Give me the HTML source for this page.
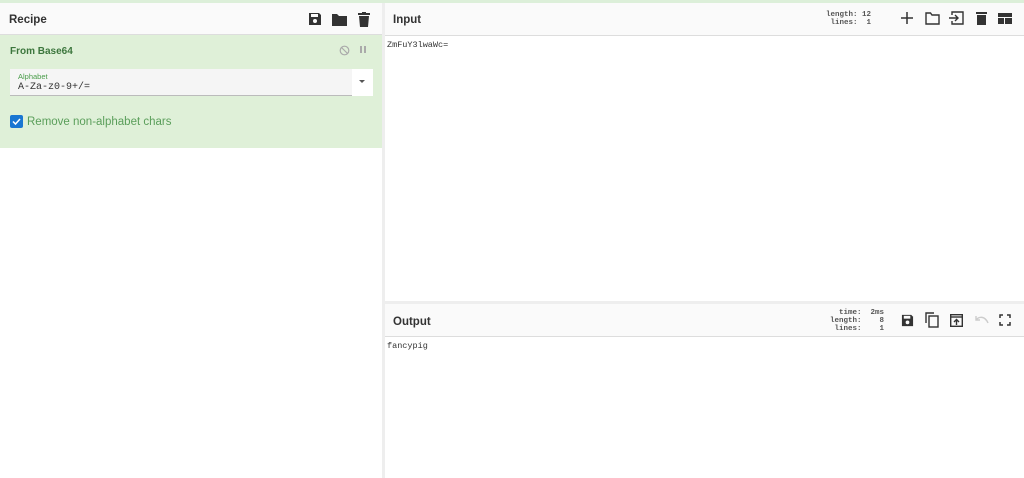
<!DOCTYPE html>
<html><head><style>
*{margin:0;padding:0;box-sizing:border-box}
body{width:1024px;height:478px;overflow:hidden;background:#fff;font-family:"Liberation Sans",sans-serif;position:relative}
.abs{position:absolute}
.hdr{background:#fafafa;border-bottom:1px solid #ddd;font-weight:bold;font-size:11.5px;color:#333}
.mono{font-family:"Liberation Mono",monospace}
.stat{font-family:"Liberation Mono",monospace;font-size:7.5px;color:#555;text-align:right;line-height:8px}
</style></head><body>
<div class="abs" style="left:0;top:0;width:1024px;height:3px;background:#dcefd9"></div>
<!-- recipe -->
<div class="abs hdr" style="left:0;top:3px;width:382px;height:32px;"><span class="abs" style="left:9px;top:11px">Recipe</span>
<svg class="abs" style="left:308px;top:9px" width="14" height="14" viewBox="0 0 14 14"><path d="M1 1h10l2 2v10H1z" fill="#333"/><rect x="3" y="2" width="7" height="3" fill="#fafafa"/><circle cx="7" cy="9" r="2" fill="#fafafa"/></svg>
<svg class="abs" style="left:332px;top:10px" width="15" height="13" viewBox="0 0 15 13"><path d="M0 1h5l2 2h8v10H0z" fill="#333"/></svg>
<svg class="abs" style="left:358px;top:9px" width="12" height="15" viewBox="0 0 12 15"><rect x="0" y="1" width="12" height="2" fill="#333"/><rect x="4" y="0" width="4" height="2" fill="#333"/><path d="M1 4h10l-1 11H2z" fill="#333"/></svg>
</div>
<div class="abs" style="left:0;top:35px;width:382px;height:113px;background:#dff0d8"></div>
<div class="abs" style="left:10px;top:46px;font-size:10px;font-weight:bold;color:#3c763d">From Base64</div>
<svg class="abs" style="left:339px;top:45px" width="11" height="11" viewBox="0 0 11 11"><circle cx="5.5" cy="5.5" r="4.3" fill="none" stroke="#aaa" stroke-width="1.2"/><path d="M2.5 2.5l6 6" stroke="#aaa" stroke-width="1.2"/></svg>
<div class="abs" style="left:360px;top:46px;width:2px;height:7px;background:#aaa"></div><div class="abs" style="left:364px;top:46px;width:2px;height:7px;background:#aaa"></div>
<div class="abs" style="left:10px;top:69px;width:363px;height:27px;background:#f5f5f5;border-bottom:1px solid #bbb"></div>
<div class="abs" style="left:352px;top:69px;width:21px;height:27px;background:#fff"></div>
<div class="abs" style="left:359px;top:80px;border-left:3px solid transparent;border-right:3px solid transparent;border-top:3px solid #555"></div>
<div class="abs" style="left:18px;top:72px;font-size:7.5px;color:#4a9c4a">Alphabet</div>
<div class="abs mono" style="left:18px;top:82px;font-size:10px;color:#333">A-Za-z0-9+/=</div>
<div class="abs" style="left:10px;top:115px;width:13px;height:13px;background:#1976d2;border-radius:2px"></div>
<svg class="abs" style="left:12px;top:117px" width="9" height="9" viewBox="0 0 9 9"><path d="M1 4.5l2.5 2.5L8 2" fill="none" stroke="#fff" stroke-width="1.5"/></svg>
<div class="abs" style="left:27px;top:116px;font-size:11.5px;color:#5a9e5a">Remove non-alphabet chars</div>
<!-- gutter -->
<div class="abs" style="left:382px;top:3px;width:3px;height:475px;background:#eee"></div>
<!-- input -->
<div class="abs hdr" style="left:385px;top:3px;width:639px;height:33px"><span class="abs" style="left:8px;top:11px">Input</span>
<div class="abs stat" style="left:430px;top:8px;width:56px">length: 12<br>lines:&nbsp; 1</div>
<svg class="abs" style="left:516px;top:9px" width="12" height="12" viewBox="0 0 12 12"><path d="M6 0v12M0 6h12" stroke="#333" stroke-width="1.5"/></svg>
<svg class="abs" style="left:540px;top:9px" width="15" height="13" viewBox="0 0 15 13"><path d="M1 1h4.5l1.5 2h7v9H1z" fill="none" stroke="#333" stroke-width="1.4"/></svg>
<svg class="abs" style="left:564px;top:8px" width="15" height="14" viewBox="0 0 15 14"><path d="M3 4V1h11v12H3v-3" fill="none" stroke="#333" stroke-width="1.4"/><path d="M0 7h9M6 4l3 3-3 3" fill="none" stroke="#333" stroke-width="1.4"/></svg>
<svg class="abs" style="left:591px;top:8px" width="11" height="14" viewBox="0 0 11 14"><rect x="0" y="1" width="11" height="2" fill="#333"/><path d="M1 4h9v10H1z" fill="#333"/></svg>
<svg class="abs" style="left:613px;top:10px" width="14" height="11" viewBox="0 0 14 11"><rect width="14" height="4" fill="#333"/><rect y="5" width="6" height="6" fill="#333"/><rect x="7" y="5" width="7" height="6" fill="#333"/></svg>
</div>
<div class="abs mono" style="left:387px;top:40px;font-size:8.5px;color:#333">ZmFuY3lwaWc=</div>
<!-- separator -->
<div class="abs" style="left:385px;top:301px;width:639px;height:3px;background:#eee"></div>
<!-- output -->
<div class="abs hdr" style="left:385px;top:304px;width:639px;height:33px"><span class="abs" style="left:8px;top:12px">Output</span>
<div class="abs stat" style="left:430px;top:5px;width:69px">time:&nbsp; 2ms<br>length:&nbsp;&nbsp;&nbsp; 8<br>lines:&nbsp;&nbsp;&nbsp; 1</div>
<svg class="abs" style="left:516px;top:10px" width="13" height="13" viewBox="0 0 14 14"><path d="M1 1h10l2 2v10H1z" fill="#333"/><rect x="3" y="2" width="7" height="3" fill="#fafafa"/><circle cx="7" cy="9" r="2" fill="#fafafa"/></svg>
<svg class="abs" style="left:540px;top:8px" width="14" height="16" viewBox="0 0 14 16"><path d="M1 11V1h8" fill="none" stroke="#333" stroke-width="1.4"/><rect x="4" y="4" width="9" height="11" fill="none" stroke="#333" stroke-width="1.4"/></svg>
<svg class="abs" style="left:565px;top:10px" width="13" height="13" viewBox="0 0 13 13"><rect x="0.7" y="0.7" width="11.6" height="11.6" fill="none" stroke="#333" stroke-width="1.4"/><path d="M1 3h11" stroke="#333" stroke-width="1.4"/><path d="M6.5 11V6M4 8l2.5-2.5L9 8" fill="none" stroke="#333" stroke-width="1.4"/></svg>
<svg class="abs" style="left:590px;top:11px" width="14" height="10" viewBox="0 0 14 10"><path d="M1 5c3-4 9-4 12 3M1 1v4h4" fill="none" stroke="#ccc" stroke-width="1.4"/></svg>
<svg class="abs" style="left:614px;top:10px" width="12" height="12" viewBox="0 0 12 12"><path d="M1 4V1h3M8 1h3v3M11 8v3H8M4 11H1V8" fill="none" stroke="#333" stroke-width="1.5"/></svg>
</div>
<div class="abs mono" style="left:387px;top:341px;font-size:8.5px;color:#333">fancypig</div>
</body></html>
